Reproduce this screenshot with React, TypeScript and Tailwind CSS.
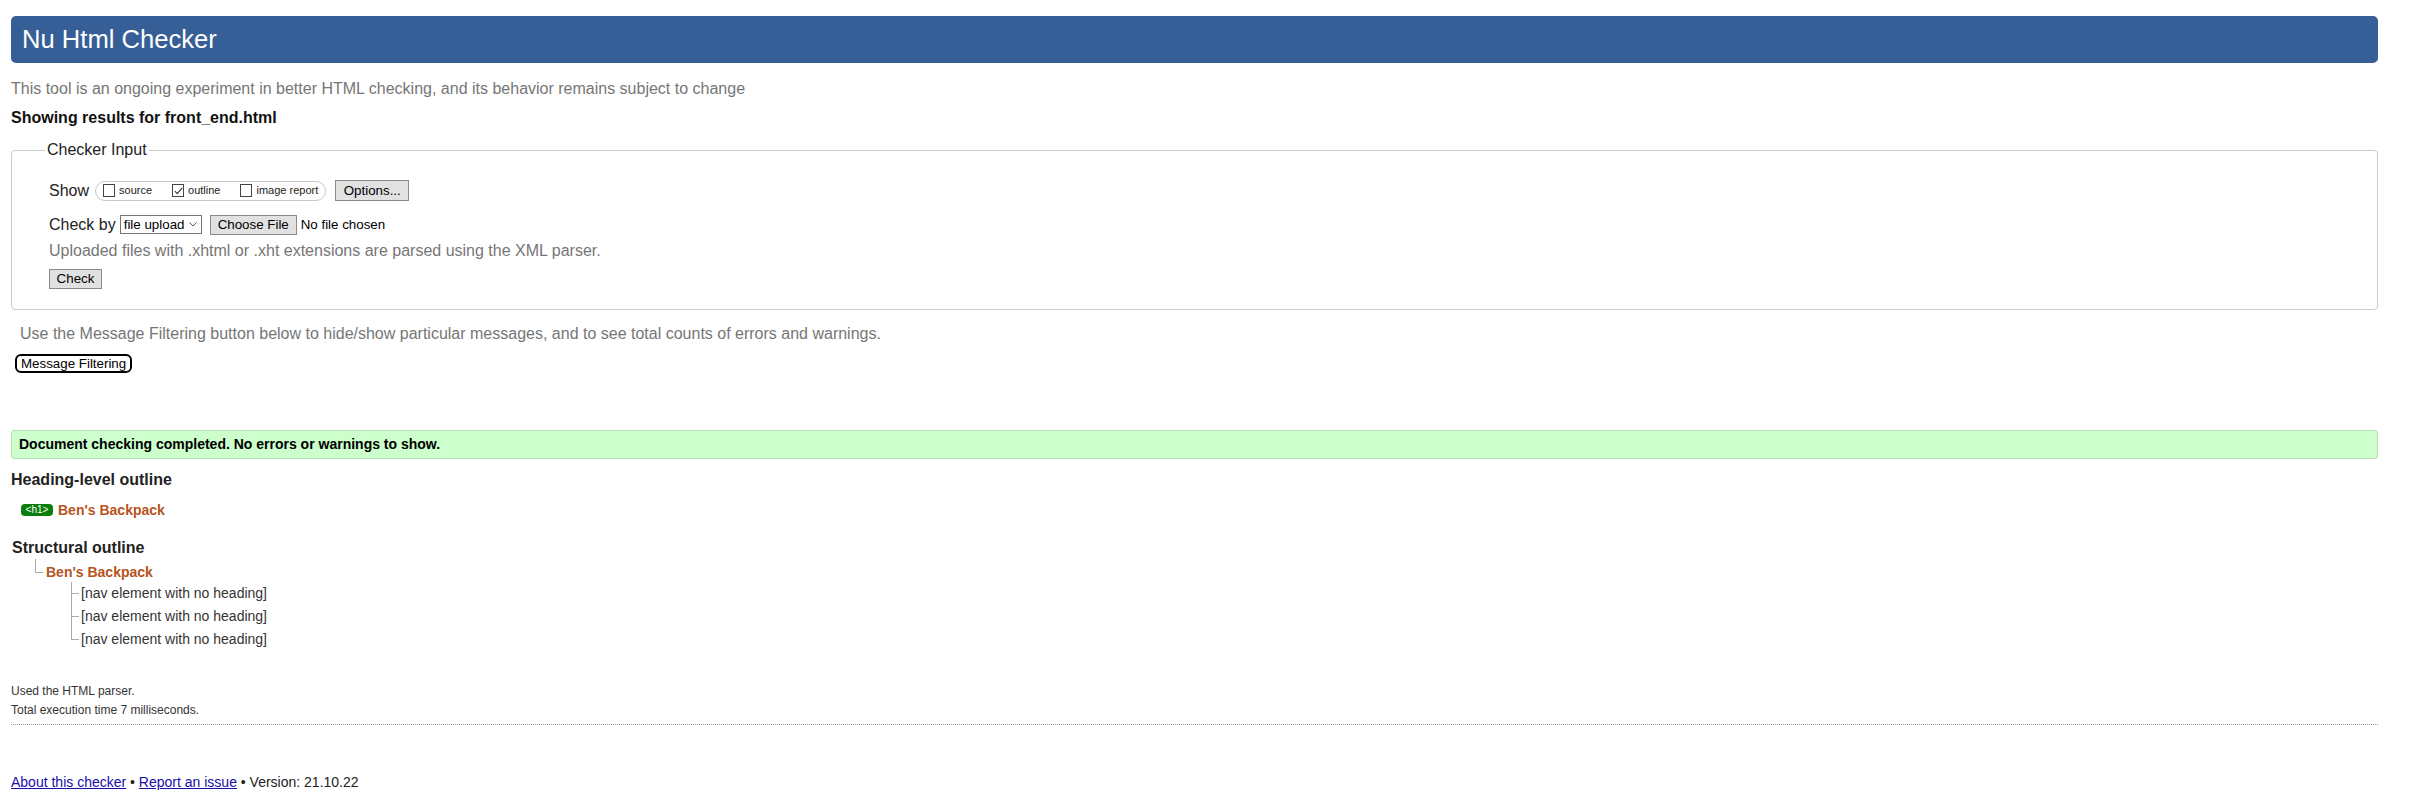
// Nu Html Checker result page: header, checker input form, message filter,
// success banner, heading + structural outlines and the footer.

const font = "font-['Liberation_Sans',Arial,sans-serif]";

export default function App() {
  return (
    <div className={`${font} bg-white text-[#222] min-h-[799px] ml-[11px] mr-[44px] pt-[16px]`}>
      <header className="h-[47px] rounded-[5px] bg-[#365e97] px-[11px] flex items-center">
        <h1 className="text-[25.6px] text-white leading-none">Nu Html Checker</h1>
      </header>

      <p className="mt-[17px] text-[16px] leading-[18px] text-[#767676]">
        This tool is an ongoing experiment in better HTML checking, and its behavior remains subject to change
      </p>
      <p className="mt-[11px] text-[16px] leading-[18px] font-bold text-[#111]">
        Showing results for front_end.html
      </p>

      <CheckerInput />

      <p className="mt-[15px] ml-[9px] text-[16px] leading-[18px] text-[#767676]">
        Use the Message Filtering button below to hide/show particular messages, and to see total counts of errors and warnings.
      </p>
      <button className="mt-[11px] ml-[4px] h-[19px] px-[4px] border-2 border-black rounded-[6px] bg-white text-[13.33px] leading-none text-black flex items-center">
        Message Filtering
      </button>

      <div className="mt-[57px] h-[29px] border border-[#b9dcb9] rounded-[3px] bg-[#ccffcc] pl-[7px] flex items-center">
        <span className="text-[14px] font-bold text-black">
          Document checking completed. No errors or warnings to show.
        </span>
      </div>

      <h2 className="mt-[11px] text-[16px] leading-[20px] font-bold text-[#222]">Heading-level outline</h2>
      <div className="mt-[12px] ml-[10px] h-[16px] flex items-center gap-[5px]">
        <span className="h-[12px] w-[32px] rounded-[4px] bg-[#0a7d0a] text-white text-[10px] leading-[12px] flex items-center justify-center">
          &lt;h1&gt;
        </span>
        <span className="text-[14px] leading-[16px] font-bold text-[#b5541c]">Ben's Backpack</span>
      </div>

      <h2 className="mt-[20px] ml-[1px] text-[16px] leading-[20px] font-bold text-[#222]">Structural outline</h2>
      <div className="mt-[1px] ml-[24px] flex">
        <span className="w-[8px] h-[14px] border-l border-b border-[#aaa]" />
        <span className="mt-[5px] ml-[3px] text-[14px] leading-[16px] font-bold text-[#b5541c]">Ben's Backpack</span>
      </div>
      <ul className="mt-[2px] ml-[60px]">
        <NavItem />
        <NavItem />
        <NavItem last />
      </ul>

      <div className="mt-[31px] text-[12px] leading-[19px] text-[#333]">
        <p>Used the HTML parser.</p>
        <p>Total execution time 7 milliseconds.</p>
      </div>
      <hr className="mt-[4px] border-0 border-t border-dotted border-[#999]" />

      <p className="mt-[48px] text-[14px] leading-[18px] text-[#222]">
        <a href="#" className="text-[#1a0dab] underline">About this checker</a>
        {" • "}
        <a href="#" className="text-[#1a0dab] underline">Report an issue</a>
        {" • Version: 21.10.22"}
      </p>
    </div>
  );
}

function CheckerInput() {
  return (
    <fieldset className="mt-[14px] border border-[#ccc] rounded-[4px] pl-[37px] pt-[21px] pb-[20px]">
      <legend className="-ml-[4px] px-[2px] text-[16px] leading-[18px] text-[#222]">Checker Input</legend>

      <div className="h-[21px] flex items-center">
        <span className="text-[16px] text-[#222]">Show</span>
        <div className="ml-[6px] h-[20px] px-[7px] rounded-full border border-[#c8c8c8] flex items-center gap-[20px]">
          <Option label="source" />
          <Option label="outline" checked />
          <Option label="image report" />
        </div>
        <Button className="ml-[9px] w-[74px] h-[21px]">Options...</Button>
      </div>

      <div className="mt-[13px] h-[21px] flex items-center">
        <span className="text-[16px] text-[#222]">Check by</span>
        <div className="ml-[4px] w-[82px] h-[19px] border border-[#767676] flex items-center justify-between pl-[3px] pr-[4px] text-[13.33px] text-black">
          file upload
          <svg width="8" height="5" viewBox="0 0 8 5" aria-hidden="true">
            <polyline points="0.5,0.5 4,4 7.5,0.5" fill="none" stroke="#555" strokeWidth="1" />
          </svg>
        </div>
        <Button className="ml-[8px] w-[87px] h-[20px]">Choose File</Button>
        <span className="ml-[4px] text-[13.33px] text-black">No file chosen</span>
      </div>

      <p className="mt-[7px] text-[16px] leading-[18px] text-[#767676]">
        Uploaded files with .xhtml or .xht extensions are parsed using the XML parser.
      </p>

      <Button className="mt-[9px] w-[53px] h-[20px]">Check</Button>
    </fieldset>
  );
}

function Button({ children, className }: { children: React.ReactNode; className: string }) {
  return (
    <button
      className={`${className} border border-[#8a8a8a] bg-[#e1e1e1] text-[13.33px] leading-none text-black flex items-center justify-center`}
    >
      {children}
    </button>
  );
}

function Option({ label, checked }: { label: string; checked?: boolean }) {
  return (
    <label className="flex items-center gap-[4px] text-[11px] text-[#222]">
      <span className="w-[12px] h-[13px] border border-[#444] bg-white flex items-center justify-center">
        {checked && (
          <svg width="9" height="8" viewBox="0 0 9 8" aria-hidden="true">
            <polyline points="0.8,4 3.2,6.6 8.2,0.8" fill="none" stroke="#333" strokeWidth="1.1" />
          </svg>
        )}
      </span>
      {label}
    </label>
  );
}

function NavItem({ last }: { last?: boolean }) {
  return (
    <li className="h-[23px] flex">
      <span className="w-[8px] flex flex-col">
        <span className="h-[11.5px] border-l border-b border-[#aaa]" />
        {!last && <span className="flex-1 border-l border-[#aaa]" />}
      </span>
      <span className="ml-[2px] text-[14px] leading-[23px] text-[#333]">[nav element with no heading]</span>
    </li>
  );
}
